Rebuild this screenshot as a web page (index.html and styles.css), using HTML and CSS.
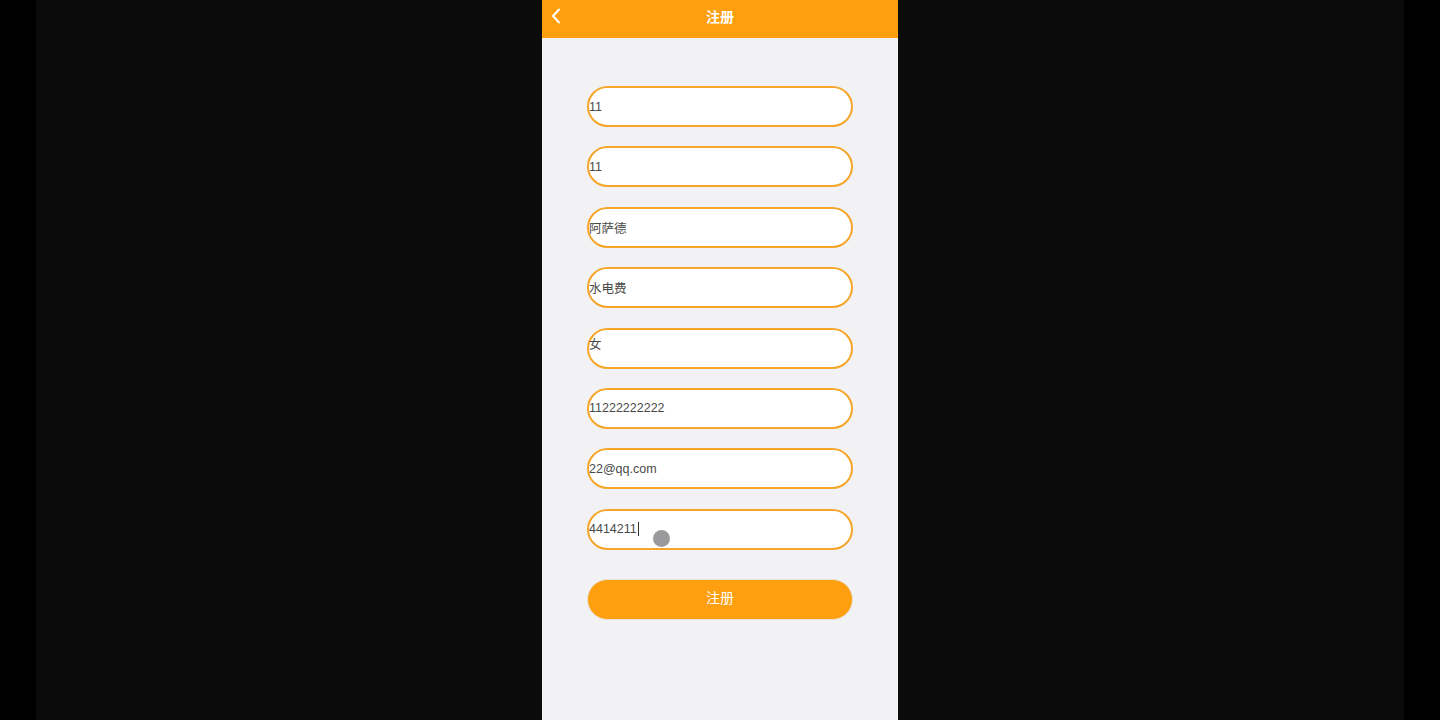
FILE: index.html
```html
<!DOCTYPE html>
<html lang="zh-CN">
<head>
<meta charset="utf-8">
<title>注册</title>
<link rel="stylesheet" href="styles.css">
</head>
<body>
<div class="stage">
  <div class="backdrop">
    <div class="phone">
      <header class="bar">
        <svg class="back" width="12" height="16" viewBox="0 0 12 16"><path d="M9 1.5 L3 8 L9 14.5" fill="none" stroke="#fff" stroke-width="2" stroke-linecap="round" stroke-linejoin="round"/></svg>
        <h1 class="title">注册</h1>
      </header>
      <main class="form">
        <div class="field">11</div>
        <div class="field">11</div>
        <div class="field">阿萨德</div>
        <div class="field">水电费</div>
        <div class="field field-high">女</div>
        <div class="field">11222222222</div>
        <div class="field">22@qq.com</div>
        <div class="field">4414211<span class="caret"></span><span class="touch"></span></div>
        <button class="submit">注册</button>
      </main>
    </div>
  </div>
</div>
</body>
</html>
```
FILE: styles.css
```css
html, body {
  margin: 0;
  padding: 0;
  background: #000;
}
.stage {
  width: 1440px;
  height: 720px;
  display: flex;
  justify-content: center;
  background: #000;
  overflow: hidden;
}
.backdrop {
  width: 1368px;
  height: 720px;
  background: #0b0b0b;
  display: flex;
  justify-content: center;
}
.phone {
  width: 356px;
  height: 720px;
  background: #f2f1f3;
  display: flex;
  flex-direction: column;
  font-family: "Liberation Sans", "Noto Sans CJK SC", sans-serif;
}
.bar {
  height: 38px;
  background: #fe9f0f;
  display: flex;
  align-items: center;
  justify-content: center;
  position: relative;
}
.back {
  position: absolute;
  left: 8px;
  top: 8px;
}
.title {
  margin: 0 0 6px;
  color: #fff;
  font-size: 14px;
  font-weight: bold;
  font-family: "Noto Sans CJK SC", sans-serif;
  line-height: 1;
}
.form {
  display: flex;
  flex-direction: column;
  align-items: center;
  padding-top: 48px;
  gap: 19.4px;
}
.field {
  box-sizing: border-box;
  width: 266px;
  height: 41px;
  border: 2px solid #f5a62a;
  border-radius: 21px;
  background: #fff;
  display: flex;
  align-items: center;
  padding-left: 0;
  font-size: 12.5px;
  color: #4a4a4a;
  position: relative;
}
.field-high {
  align-items: flex-start;
  padding-top: 4px;
}
.caret {
  display: inline-block;
  width: 1px;
  height: 14px;
  background: #333;
  margin-left: 1px;
}
.touch {
  position: absolute;
  left: 64px;
  top: 19px;
  width: 17px;
  height: 17px;
  border-radius: 50%;
  background: #9a999b;
}
.submit {
  margin-top: 9.6px;
  width: 266px;
  height: 41px;
  border: 1px solid #e9e3da;
  border-radius: 21px;
  background: #fe9f0f;
  color: #fff;
  font-size: 14px;
  font-family: "Noto Sans CJK SC", sans-serif;
  padding: 0 0 4px;
}
```
